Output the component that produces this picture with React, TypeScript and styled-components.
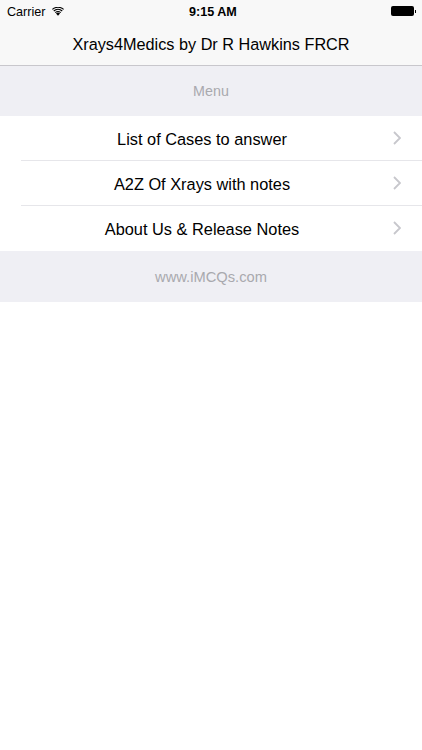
import React from 'react';
import styled, { createGlobalStyle } from 'styled-components';

const GlobalStyle = createGlobalStyle`
  html, body {
    margin: 0;
    padding: 0;
    background: #ffffff;
    font-family: "Liberation Sans", Arial, sans-serif;
  }
`;

const Screen = styled.div`
  width: 422px;
  height: 750px;
  background: #ffffff;
  overflow: hidden;
`;

const Header = styled.header`
  background: #f8f8f8;
  border-bottom: 1px solid #c8c7cc;
  height: 65px;
`;

const StatusBar = styled.div`
  height: 22px;
  box-sizing: border-box;
  display: grid;
  grid-template-columns: 182px auto 1fr;
  align-items: center;
  padding: 1px 6px 0 7px;
  font-size: 12.6px;
  color: #000000;
`;

const CarrierGroup = styled.div`
  display: flex;
  align-items: center;
  gap: 7px;
`;

const Time = styled.div`
  font-weight: 700;
`;

const Battery = styled.div`
  justify-self: end;
  display: flex;
  align-items: center;
  gap: 1px;
  margin-top: -1px;
`;

const BatteryBody = styled.div`
  width: 23px;
  height: 10px;
  background: #000000;
  border-radius: 2px;
`;

const BatteryTip = styled.div`
  width: 1px;
  height: 3px;
  background: #000000;
`;

const Title = styled.h1`
  margin: 0;
  height: 43px;
  padding-top: 1px;
  box-sizing: border-box;
  display: flex;
  align-items: center;
  justify-content: center;
  font-size: 16.25px;
  font-weight: 400;
  color: #000000;
`;

const SectionBand = styled.div<{ $height: number; $size: number }>`
  height: ${(p) => p.$height}px;
  background: #efeff4;
  color: #a9a9ae;
  font-size: ${(p) => p.$size}px;
  display: flex;
  align-items: center;
  justify-content: center;
`;

const List = styled.div`
  background: #ffffff;
`;

const Row = styled.div<{ $last?: boolean }>`
  height: 42px;
  margin-left: 21px;
  padding: 2px 21px 0 0;
  display: flex;
  align-items: center;
  border-bottom: 1px solid ${(p) => (p.$last ? 'transparent' : '#e6e6ea')};
`;

const RowLabel = styled.span`
  flex: 1;
  text-align: center;
  font-size: 16.35px;
  color: #000000;
  margin: 0 -11px 0 -21px;
`;

const ChevronIcon = styled.svg`
  flex: none;
  display: block;
  margin-top: -2px;
`;

const WifiIcon = () => (
  <svg width="12" height="9" viewBox="0 0 12 9">
    <path d="M6 8.8 4 6.5a3 3 0 0 1 4 0Z" fill="#000" />
    <path d="M2.9 5.3a4.6 4.6 0 0 1 6.2 0l-.7.8a3.6 3.6 0 0 0-4.8 0Z" fill="#000" />
    <path d="M1.4 3.6a6.9 6.9 0 0 1 9.2 0l-.7.8a5.9 5.9 0 0 0-7.8 0Z" fill="#000" />
    <path d="M0 2a9 9 0 0 1 12 0l-.7.8a8 8 0 0 0-10.6 0Z" fill="#000" />
  </svg>
);

const Chevron = () => (
  <ChevronIcon width="8" height="14" viewBox="0 0 8 14">
    <path d="M1 1l6 6-6 6" fill="none" stroke="#c7c7cc" strokeWidth="1.8" />
  </ChevronIcon>
);

const rows = ['List of Cases to answer', 'A2Z Of Xrays with notes', 'About Us & Release Notes'];

const App: React.FC = () => {
  return (
    <Screen>
      <GlobalStyle />
      <Header>
        <StatusBar>
          <CarrierGroup>
            <span>Carrier</span>
            <WifiIcon />
          </CarrierGroup>
          <Time>9:15 AM</Time>
          <Battery>
            <BatteryBody />
            <BatteryTip />
          </Battery>
        </StatusBar>
        <Title>Xrays4Medics by Dr R Hawkins FRCR</Title>
      </Header>
      <SectionBand $height={50} $size={14.3}>Menu</SectionBand>
      <List>
        {rows.map((row, i) => (
          <Row key={row} $last={i === rows.length - 1}>
            <RowLabel>{row}</RowLabel>
            <Chevron />
          </Row>
        ))}
      </List>
      <SectionBand $height={51} $size={14.7}>www.iMCQs.com</SectionBand>
    </Screen>
  );
};

export default App;
